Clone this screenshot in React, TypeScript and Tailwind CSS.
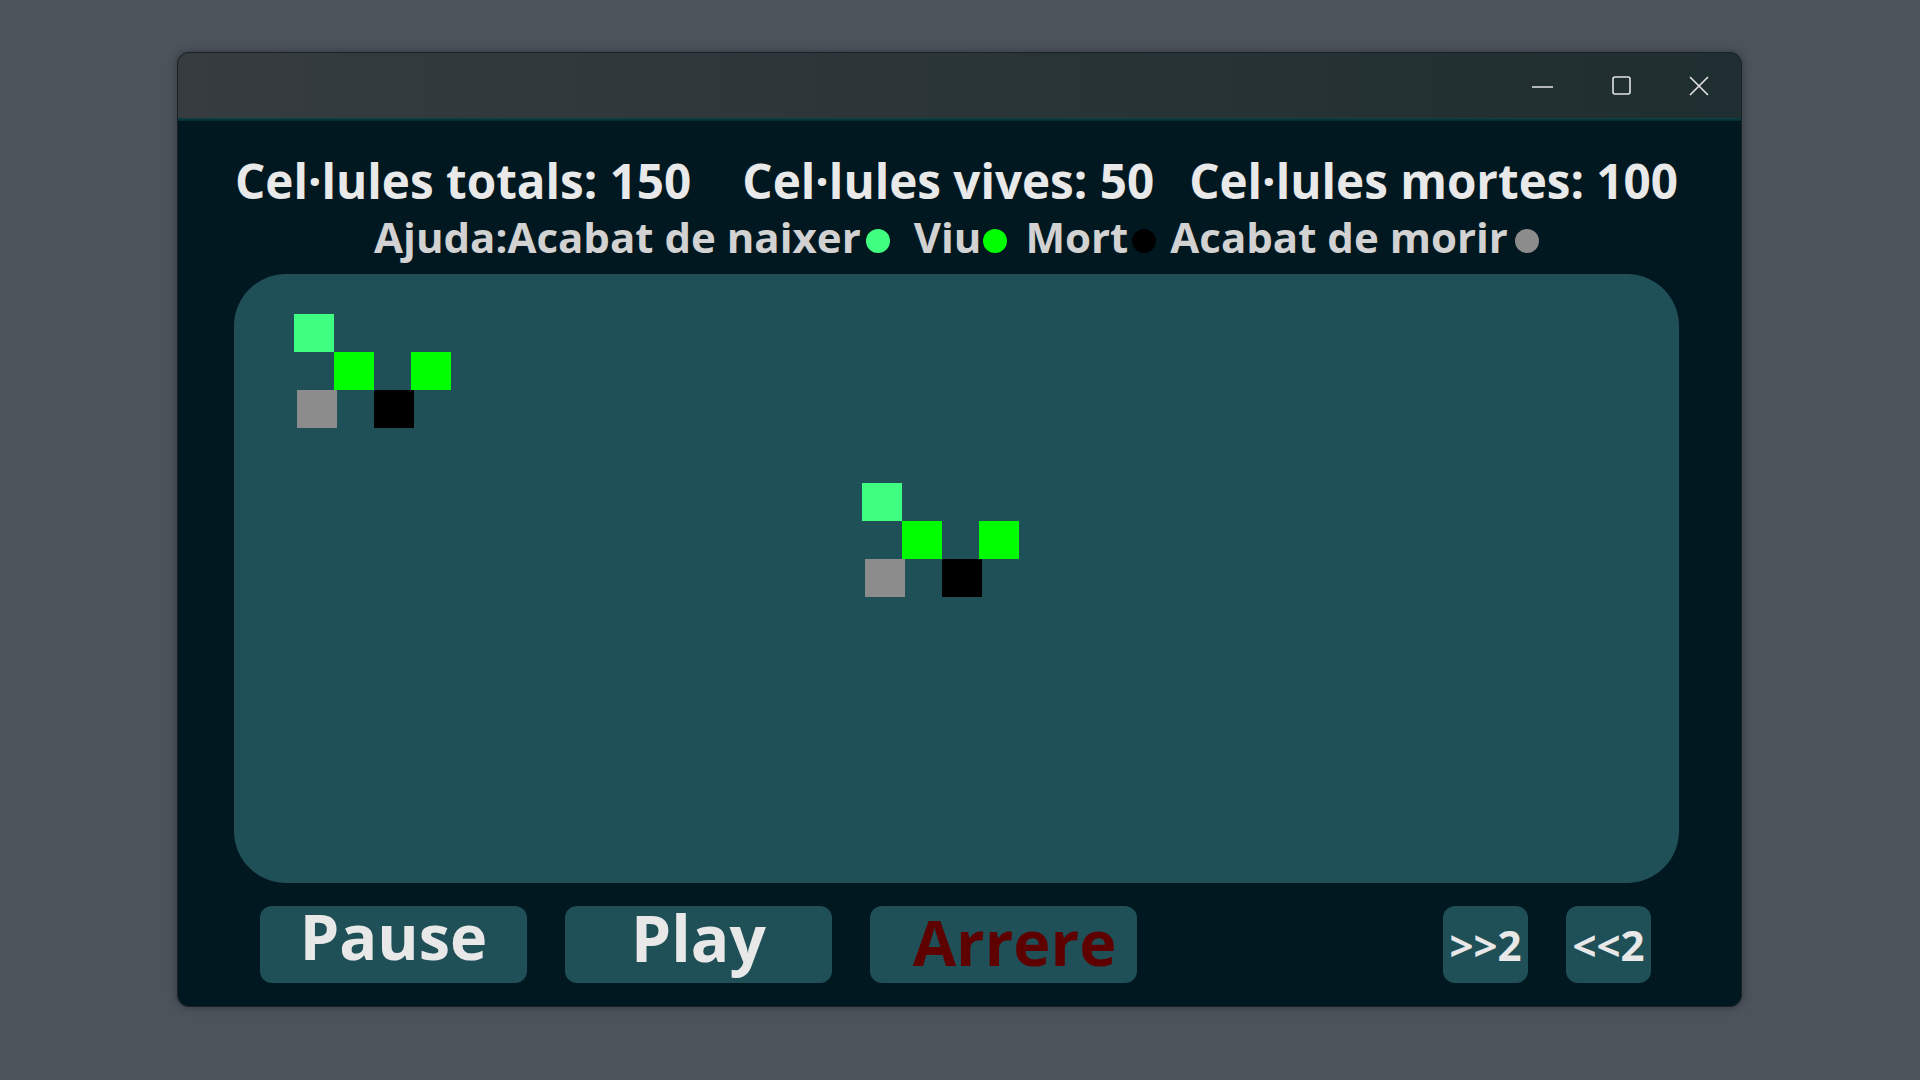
import React from "react";

type Cell = { x: number; y: number; c: string };

const pattern: Cell[] = [
  { x: 0, y: 0, c: "bg-[#40ff80]" },
  { x: 40, y: 38, c: "bg-[#00ff00]" },
  { x: 117, y: 38, c: "bg-[#00ff00]" },
  { x: 3, y: 76, c: "bg-[#8c8c8c]" },
  { x: 80, y: 76, c: "bg-[#000000]" },
];

const origins = [
  { x: 60, y: 40 },
  { x: 628, y: 209 },
];

function Dot({ color, ml }: { color: string; ml: string }) {
  return <span className={`inline-block w-[24px] h-[24px] rounded-full ${color} ${ml}`} />;
}

export default function App() {
  const font = { fontFamily: '"Open Sans", "Noto Sans", sans-serif' };
  return (
    <div className="w-[1920px] h-[1080px] bg-[#4c535b] relative overflow-hidden" style={font}>
      <div className="absolute left-[177px] top-[52px] w-[1565px] h-[955px] rounded-[12px] border border-[#1a2124] bg-[#021820] overflow-hidden shadow-[0_0_8px_rgba(0,0,0,0.35)] flex flex-col">
        {/* Title bar */}
        <div className="h-[65px] bg-gradient-to-r from-[#363c40] to-[#1f2e30] flex items-center justify-end shrink-0">
          <svg width="22" height="22" viewBox="0 0 22 22" className="mr-[58px]">
            <line x1="0" y1="12" x2="21" y2="12" stroke="#e4e4e4" strokeWidth="1.6" />
          </svg>
          <svg width="20" height="20" viewBox="0 0 20 20" className="mr-[57px]">
            <rect x="1" y="1" width="17" height="17" rx="2" fill="none" stroke="#e4e4e4" strokeWidth="1.6" />
          </svg>
          <svg width="20" height="20" viewBox="0 0 20 20" className="mr-[32px]">
            <path d="M1 1 L19 19 M19 1 L1 19" stroke="#e4e4e4" strokeWidth="1.6" />
          </svg>
        </div>
        <div className="h-[3px] bg-gradient-to-b from-[#0f4346] to-[#062a2e] shrink-0" />
        {/* Body */}
        <div className="flex flex-col flex-1">
          <div className="ml-[56px] w-[1445px] mt-[32px] h-[56px] flex justify-center items-baseline text-[47.6px] leading-[56px] font-bold text-[#e9e9e9] whitespace-nowrap">
            <span>Cel·lules totals: 150</span>
            <span className="ml-[51px]">Cel·lules vives: 50</span>
            <span className="ml-[35px]">Cel·lules mortes: 100</span>
          </div>
          <div className="ml-[56px] w-[1445px] mt-[6px] h-[44px] flex justify-center items-baseline text-[42px] leading-[44px] font-bold text-[#d2d2d2] whitespace-nowrap">
            <span>Ajuda:Acabat de naixer</span>
            <Dot color="bg-[#40ff80]" ml="ml-[5px]" />
            <span className="ml-[24px]">Viu</span>
            <Dot color="bg-[#00ff00]" ml="ml-[2px]" />
            <span className="ml-[18px]">Mort</span>
            <Dot color="bg-[#000000]" ml="ml-[4px]" />
            <span className="ml-[14px]">Acabat de morir</span>
            <Dot color="bg-[#8c8c8c]" ml="ml-[7px]" />
          </div>
          <div className="ml-[56px] w-[1445px] mt-[15px] h-[609px] rounded-[52px] bg-[#1f4f57] relative shrink-0">
            {origins.map((o, i) =>
              pattern.map((p, j) => (
                <div
                  key={`${i}-${j}`}
                  className={`absolute w-[40px] h-[38px] ${p.c}`}
                  style={{ left: o.x + p.x, top: o.y + p.y }}
                />
              ))
            )}
          </div>
          <div className="mt-[23px] h-[77px] flex items-start">
            <div className="ml-[82px] w-[267px] h-[77px] rounded-[12px] bg-[#1f4f57] flex justify-center">
              <span className="text-[63px] leading-[60px] font-bold text-[#e8e8e8]">Pause</span>
            </div>
            <div className="ml-[38px] w-[267px] h-[77px] rounded-[12px] bg-[#1f4f57] flex justify-center">
              <span className="text-[64px] leading-[64px] font-bold text-[#e8e8e8]">Play</span>
            </div>
            <div className="ml-[38px] w-[267px] h-[77px] rounded-[12px] bg-[#1f4f57] flex justify-center pl-[22px] pt-[5px]">
              <span className="text-[63px] leading-[62px] font-bold text-[#5e0000]">Arrere</span>
            </div>
            <div className="ml-[306px] w-[85px] h-[77px] rounded-[12px] bg-[#1f4f57] flex justify-center items-center">
              <span className="text-[42px] leading-[42px] font-bold text-[#e8e8e8]">&gt;&gt;2</span>
            </div>
            <div className="ml-[38px] w-[85px] h-[77px] rounded-[12px] bg-[#1f4f57] flex justify-center items-center">
              <span className="text-[42px] leading-[42px] font-bold text-[#e8e8e8]">&lt;&lt;2</span>
            </div>
          </div>
        </div>
      </div>
    </div>
  );
}
